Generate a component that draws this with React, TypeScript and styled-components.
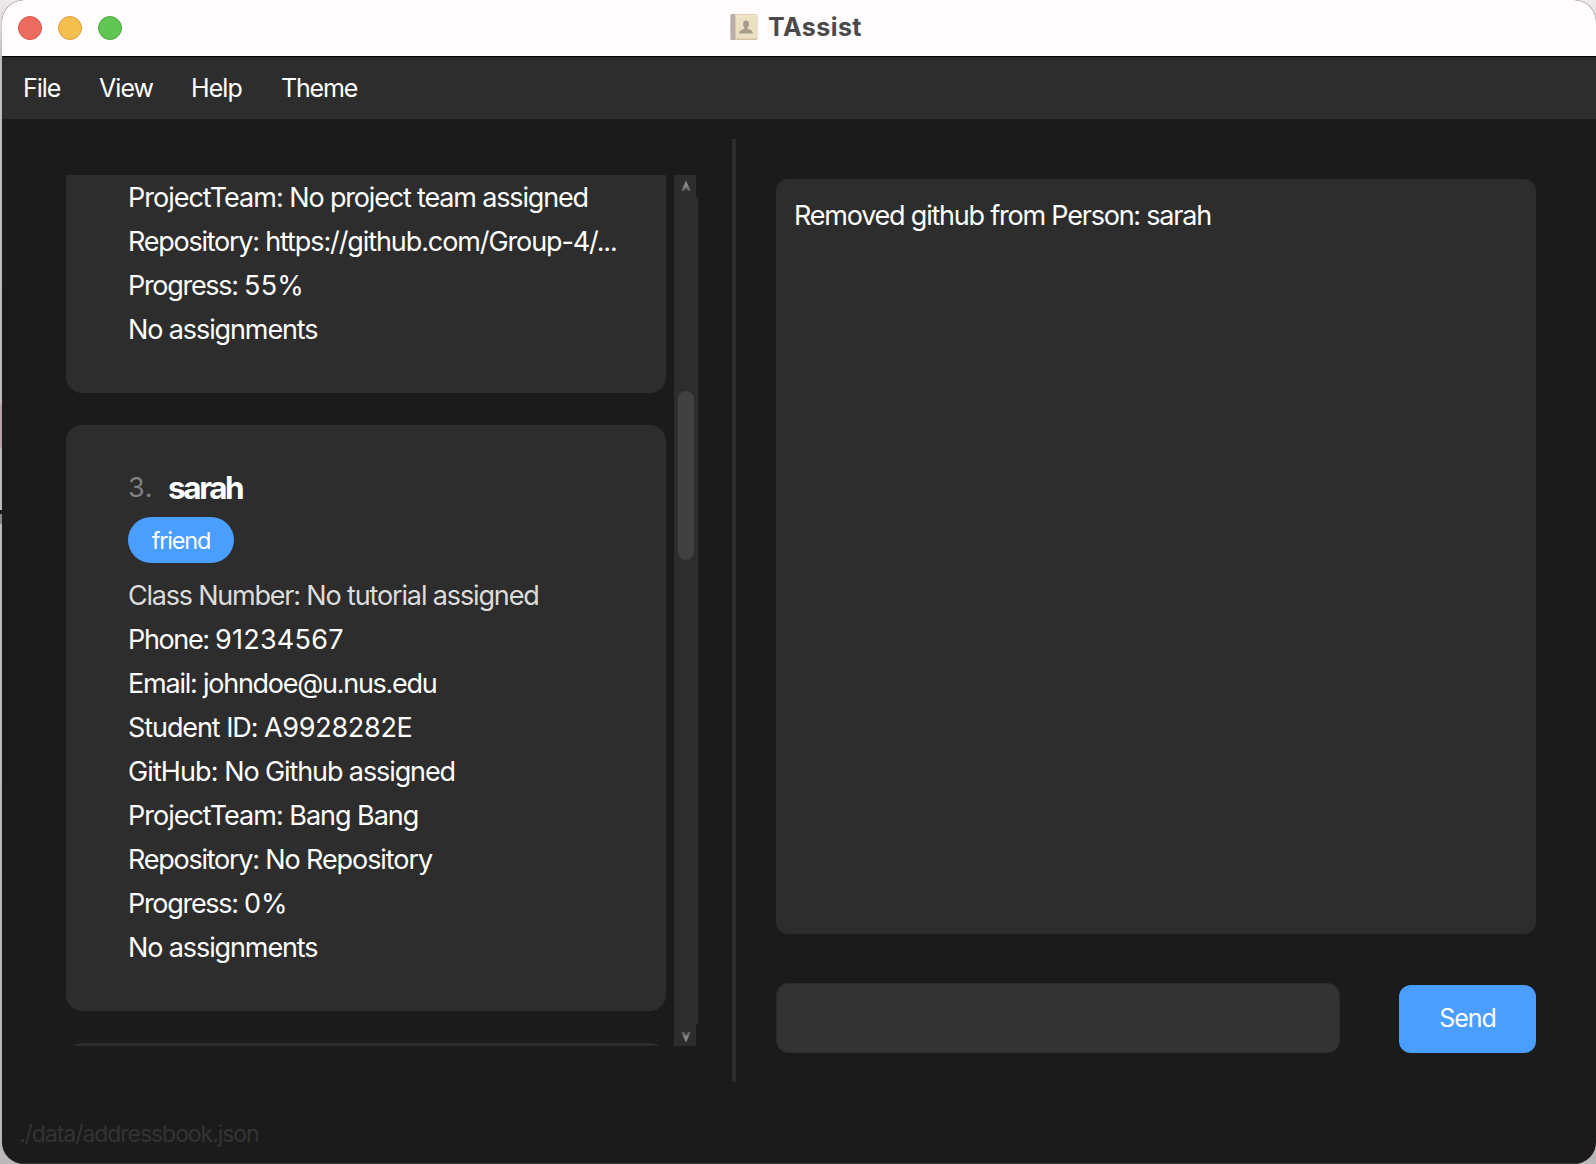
import React from "react";
import styled, { createGlobalStyle } from "styled-components";

const Global = createGlobalStyle`
  * { box-sizing: border-box; }
  body { margin: 0; background: #c9c3c5; font-family: Inter, "Liberation Sans", sans-serif; overflow: hidden; }
`;

const Desktop = styled.div`
  width: 1596px; height: 1164px; padding: 0 0 0 2px; overflow: hidden;
  background: linear-gradient(180deg, #efebec 0, #c4bec0 60px, #c2bdbf 404px, #b9a5a8 404px, #b9a5a8 448px,
    #c2bdbf 448px, #c2bdbf 510px, #1a1a1a 510px, #1a1a1a 514px, #8a8687 514px, #8a8687 524px, #c2bdbf 524px, #bcb7b9 100%);
`;
const Window = styled.div`
  display: flex; flex-direction: column; width: 1594px; height: 1164px;
  border-radius: 22px; overflow: hidden; background: #1b1b1b;
  box-shadow: 0 0 1px 0 #7a7678;
`;
const TitleBar = styled.header`
  position: relative; display: flex; align-items: center; justify-content: center;
  height: 56px; background: #fefcfd; flex: none;
`;
const Lights = styled.div`
  position: absolute; left: 16px; top: 16px; display: flex; gap: 16px;
`;
const Light = styled.span<{ $fill: string; $edge: string }>`
  width: 24px; height: 24px; border-radius: 50%;
  background: ${p => p.$fill}; border: 1px solid ${p => p.$edge};
`;
const Title = styled.div`
  display: flex; align-items: center; gap: 10px; height: 52px; margin: -2px 0 0 -6px;
`;
const Label = styled.span<{ $track?: number }>`
  letter-spacing: ${p => p.$track ?? 0}px; white-space: pre;
`;
const TitleText = styled(Label)`
  font-size: 25px; font-weight: 700; line-height: 30px; color: #4b4a4b;
`;
const MenuBar = styled.nav`
  display: flex; height: 63px; flex: none; gap: 39px; padding: 14px 0 0 21px;
  background: #2d2d2d; border-top: 1px solid #060606;
  box-shadow: inset 0 1px 0 #222;
`;
const MenuItem = styled(Label)<{ $width: number }>`
  width: ${p => p.$width}px; font-size: 25px; line-height: 34px; color: #fff;
`;
const Body = styled.main`
  display: flex; height: 943px; margin-top: 20px; flex: none;
`;
const ListPane = styled.section`
  display: flex; width: 730px; padding: 36px 0 36px 64px; gap: 8px;
`;
const Viewport = styled.div`
  display: flex; flex-direction: column; gap: 32px; width: 600px; height: 871px; overflow: hidden;
`;
const Card = styled.article<{ $height: number; $cut?: boolean }>`
  display: flex; flex-direction: column; flex: none; height: ${p => p.$height}px;
  padding: ${p => (p.$cut ? "1px 40px 0 62px" : "42px 40px 0 62px")};
  background: #2d2d2d; border-radius: ${p => (p.$cut ? "0 0 16px 16px" : "16px")};
`;
const FieldRow = styled.div<{ $muted?: boolean }>`
  height: 44px; font-size: 27px; line-height: 44px; white-space: nowrap;
  color: ${p => (p.$muted ? "#dcdcdc" : "#fff")};
`;
const NameRow = styled.div`
  display: flex; align-items: flex-start; gap: 17px; height: 50px;
`;
const Index = styled(Label)`
  width: 23px; font-size: 27px; line-height: 41px; color: #808080;
`;
const Name = styled(Label)`
  font-size: 31.5px; line-height: 42px; font-weight: 700; color: #fff;
`;
const Tag = styled.span`
  display: flex; align-items: center; justify-content: center; width: 106px; height: 46px;
  margin: 0 0 11px 0; border-radius: 23px; background: #4a9eff; color: #fff; font-size: 23.5px;
`;
const ScrollBar = styled.div`
  display: flex; flex-direction: column; align-items: flex-start; width: 24px; height: 871px;
`;
const ScrollButton = styled.div<{ $down?: boolean }>`
  display: flex; align-items: center; justify-content: center;
  width: 22px; height: 22px; padding: ${p => (p.$down ? "4px 0 0 2px" : "0 0 0 2px")}; background: #2d2d2d;
`;
const Track = styled.div`
  width: 24px; flex: 1; background: #2d2d2d; padding: 194px 4px 0;
`;
const Thumb = styled.div`
  width: 16px; height: 169px; border-radius: 8px; background: #414141;
`;
const Divider = styled.div`
  width: 4px; height: 943px; background: #2d2d2d;
`;
const ChatPane = styled.section`
  display: flex; flex-direction: column; width: 800px; padding: 40px 0 0 40px; gap: 49px;
`;
const Output = styled.div`
  width: 760px; height: 755px; padding: 19px 18px; border-radius: 12px; background: #2d2d2d;
  color: #fff; font-size: 27px; line-height: 36px;
`;
const CommandRow = styled.form`
  display: flex; align-items: flex-end; justify-content: space-between; width: 760px; height: 70px;
`;
const Command = styled.input`
  width: 564px; height: 70px; border-radius: 12px; border: 1px solid #2a2a2a; background: #333;
  outline: none; color: #fff; font-size: 25px; padding: 0 18px;
`;
const Send = styled.button`
  width: 137px; height: 68px; padding: 0 0 2px; border: 0; border-radius: 12px; background: #4a9eff;
  color: #fff; font-family: inherit; font-size: 25px;
`;
const StatusBar = styled.footer`
  display: flex; flex: 1; align-items: flex-start; padding: 35px 0 0 17px; box-shadow: inset 0 -1px 0 #3a3a3a;
  color: #343434; font-size: 23px; line-height: 34px;
`;

function BookIcon() {
  return (
    <svg width="28" height="28" viewBox="0 0 28 28">
      <rect x="0.5" y="1" width="27" height="26" rx="1.5" fill="#d3c3a6" />
      <rect x="5" y="1.5" width="22" height="24" rx="1" fill="#eddfc1" />
      <rect x="0.5" y="1" width="5" height="26" rx="1.5" fill="#b9aeac" />
      <path d="M5 3h22" stroke="#f5ecd8" strokeWidth="1" />
      <path d="M16 7.500c2 0 3 1.500 3 3.400 0 1.700-.8 2.400-1.300 3.300-.3 1.200.2 1.900 1.500 2.300 2.500.8 3.600 1.600 3.800 4.100H9c.2-2.500 1.300-3.300 3.800-4.100 1.300-.4 1.800-1.100 1.500-2.300-.5-.9-1.300-1.600-1.300-3.300 0-1.900 1-3.400 3-3.400z" fill="#a69d8d" />
    </svg>
  );
}

function Arrow({ down }: { down?: boolean }) {
  const id = down ? "fade-down" : "fade-up";
  return (
    <svg width="12" height="12" viewBox="0 0 12 12">
      <defs>
        <linearGradient id={id} x1="0" y1={down ? "1" : "0"} x2="0" y2={down ? "0" : "1"}>
          <stop offset="0.5" stopColor="#858585" />
          <stop offset="1" stopColor="#858585" stopOpacity="0.45" />
        </linearGradient>
      </defs>
      <path
        d={down ? "M1.200 1 6 11.500 10.800 1 8 1 6 4.500 4 1z" : "M1.200 11 6 .5 10.800 11 8 11 6 8 4 11z"}
        fill={`url(#${id})`}
      />
    </svg>
  );
}

type FieldData = { label: string; value?: string; lt: number; vt?: number; muted?: boolean };

function Field({ label, value, lt, vt, muted }: FieldData) {
  return (
    <FieldRow $muted={muted}>
      <Label $track={lt}>{value ? label + " " : label}</Label>
      {value && <Label $track={vt}>{value}</Label>}
    </FieldRow>
  );
}

const menus = [
  { text: "File", track: -1, width: 37 },
  { text: "View", track: -0.95, width: 53 },
  { text: "Help", track: -0.9, width: 51 },
  { text: "Theme", track: -1.15, width: 80 },
];

const previous: FieldData[] = [
  { label: "ProjectTeam:", value: "No project team assigned", lt: -1, vt: -1.17 },
  { label: "Repository:", value: "https://github.com/Group-4/...", lt: -1.25, vt: -1.1 },
  { label: "Progress:", value: "55%", lt: -1.3, vt: 0.2 },
  { label: "No assignments", lt: -1.11 },
];

const sarah: FieldData[] = [
  { label: "Class Number:", value: "No tutorial assigned", lt: -1.22, vt: -1.13, muted: true },
  { label: "Phone:", value: "91234567", lt: -1.36, vt: 0.25 },
  { label: "Email:", value: "johndoe@u.nus.edu", lt: -1.2, vt: -1.28 },
  { label: "Student ID:", value: "A9928282E", lt: -1.08, vt: -0.28 },
  { label: "GitHub:", value: "No Github assigned", lt: -0.9, vt: -1.11 },
  { label: "ProjectTeam:", value: "Bang Bang", lt: -1, vt: -1.03 },
  { label: "Repository:", value: "No Repository", lt: -1.25, vt: -1.08 },
  { label: "Progress:", value: "0%", lt: -1.3, vt: -0.2 },
  { label: "No assignments", lt: -1.11 },
];

export default function App() {
  return (
    <Desktop>
      <Global />
      <Window>
        <TitleBar>
          <Lights>
            <Light $fill="#ed6a5e" $edge="#d5574c" />
            <Light $fill="#f5bf4f" $edge="#d8a13d" />
            <Light $fill="#61c554" $edge="#52a842" />
          </Lights>
          <Title>
            <BookIcon />
            <TitleText $track={0.45}>TAssist</TitleText>
          </Title>
        </TitleBar>
        <MenuBar>
          {menus.map(m => (
            <MenuItem key={m.text} $track={m.track} $width={m.width}>{m.text}</MenuItem>
          ))}
        </MenuBar>
        <Body>
          <ListPane>
            <Viewport>
              <Card $height={218} $cut>
                {previous.map(f => <Field key={f.label} {...f} />)}
              </Card>
              <Card $height={586}>
                <NameRow>
                  <Index $track={0.8}>3.</Index>
                  <Name $track={-2.4}>sarah</Name>
                </NameRow>
                <Tag><Label $track={-1.2}>friend</Label></Tag>
                {sarah.map(f => <Field key={f.label} {...f} />)}
              </Card>
              <Card $height={586} />
            </Viewport>
            <ScrollBar>
              <ScrollButton><Arrow /></ScrollButton>
              <Track><Thumb /></Track>
              <ScrollButton $down><Arrow down /></ScrollButton>
            </ScrollBar>
          </ListPane>
          <Divider />
          <ChatPane>
            <Output><Label $track={-1.22}>Removed github from Person: sarah</Label></Output>
            <CommandRow>
              <Command />
              <Send type="button"><Label $track={-1.1}>Send</Label></Send>
            </CommandRow>
          </ChatPane>
        </Body>
        <StatusBar><Label $track={-1.05}>./data/addressbook.json</Label></StatusBar>
      </Window>
    </Desktop>
  );
}
